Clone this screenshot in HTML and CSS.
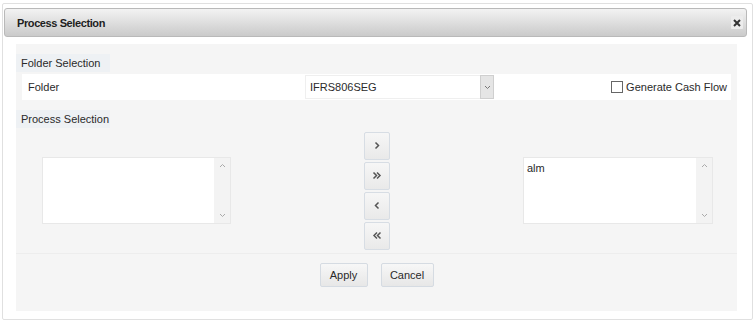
FILE: index.html
```html
<!DOCTYPE html>
<html>
<head>
<meta charset="utf-8">
<link rel="stylesheet" href="styles.css">
</head>
<body>
<div class="dialog">
  <div class="header">
    <span class="title">Process Selection</span>
    <span class="close"><svg width="8" height="8" viewBox="0 0 8 8"><path d="M1 1 L7 7 M7 1 L1 7" stroke="#333" stroke-width="2"/></svg></span>
  </div>
  <div class="content">
    <div class="label">Folder Selection</div>
    <div class="folder-row">
      <span class="folder-label">Folder</span>
      <div class="select">
        <span class="select-value">IFRS806SEG</span>
        <span class="select-btn"><svg width="7" height="5" viewBox="0 0 7 5"><path d="M1 1 L3.5 3.5 L6 1" fill="none" stroke="#777" stroke-width="1"/></svg></span>
      </div>
      <label class="check"><span class="box"></span><span>Generate Cash Flow</span></label>
    </div>
    <div class="label label2">Process Selection</div>
    <div class="transfer">
      <div class="listbox left">
        <div class="list-items"></div>
        <div class="scroll">
          <svg width="7" height="5" viewBox="0 0 7 5"><path d="M1 4 L3.5 1.5 L6 4" fill="none" stroke="#aaa" stroke-width="1"/></svg>
          <svg width="7" height="5" viewBox="0 0 7 5"><path d="M1 1 L3.5 3.5 L6 1" fill="none" stroke="#aaa" stroke-width="1"/></svg>
        </div>
      </div>
      <div class="moves">
        <button class="move"><svg width="8" height="9" viewBox="0 0 8 9"><path d="M2.5 1.5 L5.5 4.5 L2.5 7.5" fill="none" stroke="#555" stroke-width="1.5"/></svg></button>
        <button class="move"><svg width="10" height="9" viewBox="0 0 10 9"><path d="M1.5 1.5 L4.5 4.5 L1.5 7.5 M5 1.5 L8 4.5 L5 7.5" fill="none" stroke="#555" stroke-width="1.5"/></svg></button>
        <button class="move"><svg width="8" height="9" viewBox="0 0 8 9"><path d="M5.5 1.5 L2.5 4.5 L5.5 7.5" fill="none" stroke="#555" stroke-width="1.5"/></svg></button>
        <button class="move"><svg width="10" height="9" viewBox="0 0 10 9"><path d="M5 1.5 L2 4.5 L5 7.5 M8.5 1.5 L5.5 4.5 L8.5 7.5" fill="none" stroke="#555" stroke-width="1.5"/></svg></button>
      </div>
      <div class="listbox right">
        <div class="list-items"><div class="item">alm</div></div>
        <div class="scroll">
          <svg width="7" height="5" viewBox="0 0 7 5"><path d="M1 4 L3.5 1.5 L6 4" fill="none" stroke="#aaa" stroke-width="1"/></svg>
          <svg width="7" height="5" viewBox="0 0 7 5"><path d="M1 1 L3.5 3.5 L6 1" fill="none" stroke="#aaa" stroke-width="1"/></svg>
        </div>
      </div>
    </div>
    <div class="footer">
      <button class="btn apply">Apply</button>
      <button class="btn cancel">Cancel</button>
    </div>
  </div>
</div>
</body>
</html>
```
FILE: styles.css
```css
html, body {
  margin: 0;
  padding: 0;
  background: #ffffff;
}
body {
  font-family: "Liberation Sans", Arial, sans-serif;
  font-size: 11px;
  color: #2a2a2a;
}
.dialog {
  margin: 3px 0 0 2px;
  width: 751px;
  height: 317px;
  box-sizing: border-box;
  border: 1px solid #e0e0e0;
  border-radius: 2px;
  padding: 4px 5px 0 1px;
}
.header {
  height: 29px;
  box-sizing: border-box;
  border: 1px solid #b9b9b9;
  border-radius: 3px;
  background: linear-gradient(#f3f3f3, #dadada 60%, #cacaca);
  display: flex;
  align-items: center;
  justify-content: space-between;
  padding: 0 3px 0 12px;
}
.title {
  font-weight: bold;
  color: #1e1e1e;
  letter-spacing: -0.4px;
}
.close {
  width: 12px;
  height: 13px;
  background: #ececec;
  border-radius: 1px;
  display: flex;
  align-items: center;
  justify-content: center;
}
.content {
  margin: 7px 0 0 12px;
  width: 721px;
  height: 267px;
  background: #f5f5f5;
  overflow: hidden;
}
.label {
  width: 94px;
  height: 18px;
  line-height: 18px;
  margin-top: 10px;
  padding-left: 5px;
  box-sizing: border-box;
  background: #eef1f4;
}
.folder-row {
  margin: 2px 6px 0;
  height: 26px;
  background: #fff;
  display: flex;
  align-items: center;
  padding: 0 4px 0 6px;
}
.folder-label {
  width: 277px;
}
.select {
  width: 189px;
  height: 24px;
  box-sizing: border-box;
  border: 1px solid #efefef;
  display: flex;
  align-items: stretch;
}
.select-value {
  flex: 1;
  display: flex;
  align-items: center;
  padding-left: 4px;
}
.select-btn {
  width: 12px;
  background: #e5e5e5;
  border: 1px solid #cfcfcf;
  display: flex;
  align-items: center;
  justify-content: center;
  margin: -1px -1px -1px 0;
}
.check {
  margin-left: auto;
  display: flex;
  align-items: center;
  gap: 3px;
}
.box {
  width: 10px;
  height: 10px;
  border: 1px solid #666;
  background: #fff;
}
.label2 {
  margin-top: 10px;
}
.transfer {
  height: 125px;
  display: flex;
  align-items: center;
  padding-left: 26px;
}
.listbox {
  height: 67px;
  box-sizing: border-box;
  border: 1px solid #e8e8e8;
  background: #fff;
  display: flex;
}
.listbox.left {
  width: 189px;
}
.listbox.right {
  width: 190px;
}
.list-items {
  flex: 1;
  padding: 4px 3px;
}
.scroll {
  width: 16px;
  background: #f3f3f3;
  display: flex;
  flex-direction: column;
  align-items: center;
  justify-content: space-between;
  padding: 5px 0;
}
.moves {
  margin: 0 133px;
  display: flex;
  flex-direction: column;
  gap: 2px;
}
.move {
  width: 26px;
  height: 28px;
  box-sizing: border-box;
  border: 1px solid #d7dde4;
  border-radius: 2px;
  background: linear-gradient(#f6f6f6, #e9e9e9);
  padding: 0;
  display: flex;
  align-items: center;
  justify-content: center;
}
.footer {
  border-top: 1px solid #ededed;
  padding-top: 9px;
  display: flex;
  justify-content: center;
  gap: 13px;
}
.btn {
  height: 24px;
  box-sizing: border-box;
  border: 1px solid #d5dbe2;
  border-radius: 2px;
  background: linear-gradient(#f7f7f7, #e7e7e7);
  font-family: "Liberation Sans", Arial, sans-serif;
  font-size: 11px;
  color: #2a2a2a;
  padding: 0;
}
.apply {
  width: 48px;
}
.cancel {
  width: 53px;
}
```
